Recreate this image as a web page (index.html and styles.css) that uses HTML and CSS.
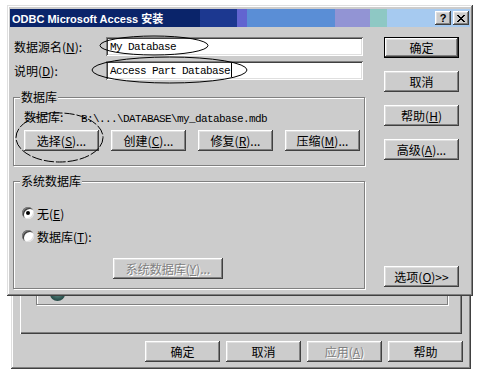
FILE: index.html
```html
<!DOCTYPE html>
<html lang="zh-CN">
<head>
    <meta charset="UTF-8">
    <title>ODBC Microsoft Access 安装</title>
    <link rel="stylesheet" href="styles.css">
</head>
<body>
    <div class="desktop">
        <!-- Dialog underneath (ODBC data source administrator) -->
        <div class="window back">
            <div class="tab-panel">
                <div class="frame">
                    <span class="item-icon"></span>
                </div>
            </div>
            <div class="button-row">
                <button class="btn">确定</button>
                <button class="btn">取消</button>
                <button class="btn" disabled>应用(<u>A</u>)</button>
                <button class="btn">帮助</button>
            </div>
        </div>

        <!-- Setup dialog -->
        <div class="window front">
            <div class="title-bar">
                <span class="title-text">ODBC Microsoft Access 安装</span>
                <div class="caption-buttons">
                    <button class="caption-btn help-btn">?</button>
                    <button class="caption-btn">
                        <svg width="8" height="7" viewBox="0 0 8 7">
                            <path d="M0 0h2v1h1v1h2V1h1V0h2v1H7v1H6v1H5v1h1v1h1v1h1v1H6V6H5V5H3v1H2v1H0V6h1V5h1V4h1V3H2V2H1V1H0z" fill="#000"/>
                        </svg>
                    </button>
                </div>
            </div>

            <div class="dialog-body">
                <div class="main-col">
                    <div class="field-row">
                        <label class="field-label">数据源名(<u>N</u>):</label>
                        <div class="textbox">My Database</div>
                    </div>
                    <div class="field-row">
                        <label class="field-label">说明(<u>D</u>):</label>
                        <div class="textbox">Access Part Database<span class="caret"></span></div>
                    </div>

                    <div class="group db-group">
                        <span class="group-title">数据库</span>
                        <div class="db-path">
                            <span class="db-path-label">数据库:</span><span class="mono">B:\...\DATABASE\my_database.mdb</span>
                        </div>
                        <div class="db-buttons">
                            <button class="btn">选择(<u>S</u>)...</button>
                            <button class="btn">创建(<u>C</u>)...</button>
                            <button class="btn">修复(<u>R</u>)...</button>
                            <button class="btn">压缩(<u>M</u>)...</button>
                        </div>
                    </div>

                    <div class="group sys-group">
                        <span class="group-title">系统数据库</span>
                        <div class="radio-row">
                            <span class="radio checked"></span>
                            <span class="radio-label">无(<u>E</u>)</span>
                        </div>
                        <div class="radio-row">
                            <span class="radio"></span>
                            <span class="radio-label">数据库(<u>T</u>):</span>
                        </div>
                        <button class="btn sys-btn" disabled>系统数据库(<u>Y</u>)...</button>
                    </div>
                </div>

                <div class="side-col">
                    <button class="btn default">确定</button>
                    <button class="btn">取消</button>
                    <button class="btn">帮助(<u>H</u>)</button>
                    <button class="btn">高级(<u>A</u>)...</button>
                    <button class="btn options-btn">选项(<u>O</u>)&gt;&gt;</button>
                </div>
            </div>
        </div>

        <!-- Hand-drawn marks over the screenshot -->
        <svg class="marks" width="480" height="374" viewBox="0 0 480 374">
            <ellipse cx="154" cy="45.5" rx="54" ry="9.5" fill="none" stroke="#000" stroke-width="1"/>
            <ellipse cx="169.5" cy="70" rx="77.5" ry="13" fill="none" stroke="#000" stroke-width="1"/>
            <ellipse cx="59.5" cy="137.5" rx="43.5" ry="24.5" fill="none" stroke="#000" stroke-width="1" stroke-dasharray="10 2"/>
        </svg>
    </div>
</body>
</html>
```

FILE: styles.css
```css
/* Base */
body, html {
    margin: 0;
    padding: 0;
    background-color: #ffffff;
}

.desktop {
    position: relative;
    width: 480px;
    height: 374px;
    overflow: hidden;
    font-family: "Noto Sans CJK SC", sans-serif;
    font-size: 12px;
    color: #000;
}

/* Windows */
.window {
    position: absolute;
    box-sizing: border-box;
    background-color: #cccccc;
    box-shadow: inset -1px -1px #404040, inset 1px 1px #dfdfdf,
                inset -2px -2px #808080, inset 2px 2px #ffffff;
}

.front {
    left: 7px;
    top: 5px;
    width: 466px;
    height: 291px;
    padding: 4px 3px 3px;
    display: flex;
    flex-direction: column;
}

.back {
    left: 11px;
    top: 20px;
    width: 460px;
    height: 349px;
    padding: 3px 8px 7px 9px;
    display: flex;
    flex-direction: column;
}

/* Title bar */
.title-bar {
    flex-shrink: 0;
    height: 18px;
    display: flex;
    align-items: center;
    justify-content: space-between;
    padding: 0 1px 0 2px;
    background: linear-gradient(to right,
        #0a246a 0, #0a246a 190px,
        #1c3890 190px, #1c3890 227px,
        #6264d0 227px, #6264d0 237px,
        #5a8ed6 237px, #5a8ed6 325px,
        #9294d4 325px, #9294d4 360px,
        #8ec8c4 360px, #8ec8c4 377px,
        #a6caf0 377px, #a6caf0 100%);
}

.title-text {
    color: #ffffff;
    font-family: "Liberation Sans", "Noto Sans CJK SC", sans-serif;
    font-weight: bold;
    font-size: 11px;
}

.caption-buttons {
    display: flex;
    gap: 2px;
}

.caption-btn {
    width: 16px;
    height: 14px;
    padding: 0;
    border: none;
    background-color: #cccccc;
    box-shadow: inset -1px -1px #404040, inset 1px 1px #ffffff,
                inset -2px -2px #808080, inset 2px 2px #dfdfdf;
    display: flex;
    align-items: center;
    justify-content: center;
    font-family: "Liberation Sans", sans-serif;
    font-weight: bold;
    font-size: 11px;
    line-height: 1;
}

/* Body */
.dialog-body {
    flex: 1;
    min-height: 0;
    display: flex;
    padding: 10px 0 6px 3px;
}

.main-col {
    width: 352px;
    display: flex;
    flex-direction: column;
}

.side-col {
    width: 75px;
    margin-left: 19px;
    display: flex;
    flex-direction: column;
    gap: 13px;
}

/* Text fields */
.field-row {
    flex-shrink: 0;
    display: flex;
    align-items: center;
    height: 19px;
    padding-left: 1px;
}

.field-row + .field-row {
    margin-top: 5px;
}

.field-label {
    width: 92px;
    line-height: 19px;
}

.textbox {
    width: 257px;
    height: 19px;
    box-sizing: border-box;
    padding: 1px 4px 0;
    background-color: #ffffff;
    box-shadow: inset 1px 1px #808080, inset -1px -1px #ffffff,
                inset 2px 2px #404040, inset -2px -2px #dfdfdf;
    font-family: "Liberation Mono", monospace;
    font-size: 11px;
    letter-spacing: -0.6px;
    line-height: 18px;
    white-space: pre;
}

.caret {
    display: inline-block;
    width: 1px;
    height: 14px;
    margin-left: 1px;
    background-color: #000;
    vertical-align: -3px;
}

.mono {
    font-family: "Liberation Mono", monospace;
    font-size: 11px;
    letter-spacing: -0.6px;
}

/* Group boxes */
.group {
    position: relative;
    flex-shrink: 0;
    box-sizing: border-box;
    width: 352px;
    border: 1px solid #808080;
    box-shadow: inset 1px 1px #ffffff, 1px 1px #ffffff;
}

.group-title {
    position: absolute;
    top: -8px;
    left: 6px;
    padding: 0 1px;
    line-height: 14px;
    background-color: #cccccc;
}

.db-group {
    margin-top: 17px;
    padding: 12px 9px 14px 10px;
}

.db-path {
    line-height: 14px;
    white-space: nowrap;
}

.db-path-label {
    display: inline-block;
    width: 57px;
}

.db-buttons {
    display: flex;
    gap: 12px;
    margin-top: 4px;
}

.sys-group {
    margin-top: 15px;
    padding: 23px 8px 9px 8px;
}

.radio-row {
    display: flex;
    align-items: center;
    height: 16px;
}

.radio-row + .radio-row {
    margin-top: 7px;
}

.radio {
    position: relative;
    width: 12px;
    height: 12px;
    border-radius: 50%;
    background-color: #ffffff;
    box-shadow: inset 1px 1px #808080, inset -1px -1px #dfdfdf,
                inset 2px 2px #404040;
}

.radio.checked::after {
    content: "";
    position: absolute;
    left: 4px;
    top: 4px;
    width: 4px;
    height: 4px;
    border-radius: 50%;
    background-color: #000;
}

.radio-label {
    margin-left: 3px;
}

/* Buttons */
.btn {
    flex-shrink: 0;
    width: 75px;
    height: 21px;
    padding: 0;
    border: none;
    background-color: #cccccc;
    box-shadow: inset -1px -1px #404040, inset 1px 1px #ffffff,
                inset -2px -2px #808080, inset 2px 2px #dfdfdf;
    font-family: inherit;
    font-size: 12px;
    line-height: 21px;
    color: #000;
    white-space: nowrap;
}

.btn.default {
    box-shadow: inset 0 0 0 1px #000000,
                inset -2px -2px #404040, inset 2px 2px #ffffff,
                inset -3px -3px #808080, inset 3px 3px #dfdfdf;
}

.btn:disabled {
    color: #808080;
    text-shadow: 1px 1px 0 #ffffff;
}

.btn.sys-btn {
    display: block;
    width: 110px;
    margin-top: 14px;
    margin-left: 91px;
}

.btn.options-btn {
    margin-top: auto;
}

/* Background dialog */
.tab-panel {
    flex: 1;
    margin-right: 1px;
    display: flex;
    flex-direction: column;
    justify-content: flex-end;
    padding: 0 14px 29px 16px;
    box-shadow: inset 1px 1px #ffffff, inset -1px -1px #404040,
                inset -2px -2px #808080;
}

.frame {
    height: 60px;
    display: flex;
    align-items: flex-end;
    padding: 0 0 3px 13px;
    border: 1px solid #808080;
    box-shadow: inset 1px 1px #ffffff, 1px 1px #ffffff;
}

.item-icon {
    width: 15px;
    height: 14px;
    border-radius: 50%;
    background: radial-gradient(circle at 50% 40%, #6a9a94 0, #2e5652 60%, #1c3634 100%);
}

.button-row {
    display: flex;
    justify-content: flex-end;
    gap: 6px;
    margin-top: 7px;
}

/* Marks */
.marks {
    position: absolute;
    left: 0;
    top: 0;
    pointer-events: none;
}
```
